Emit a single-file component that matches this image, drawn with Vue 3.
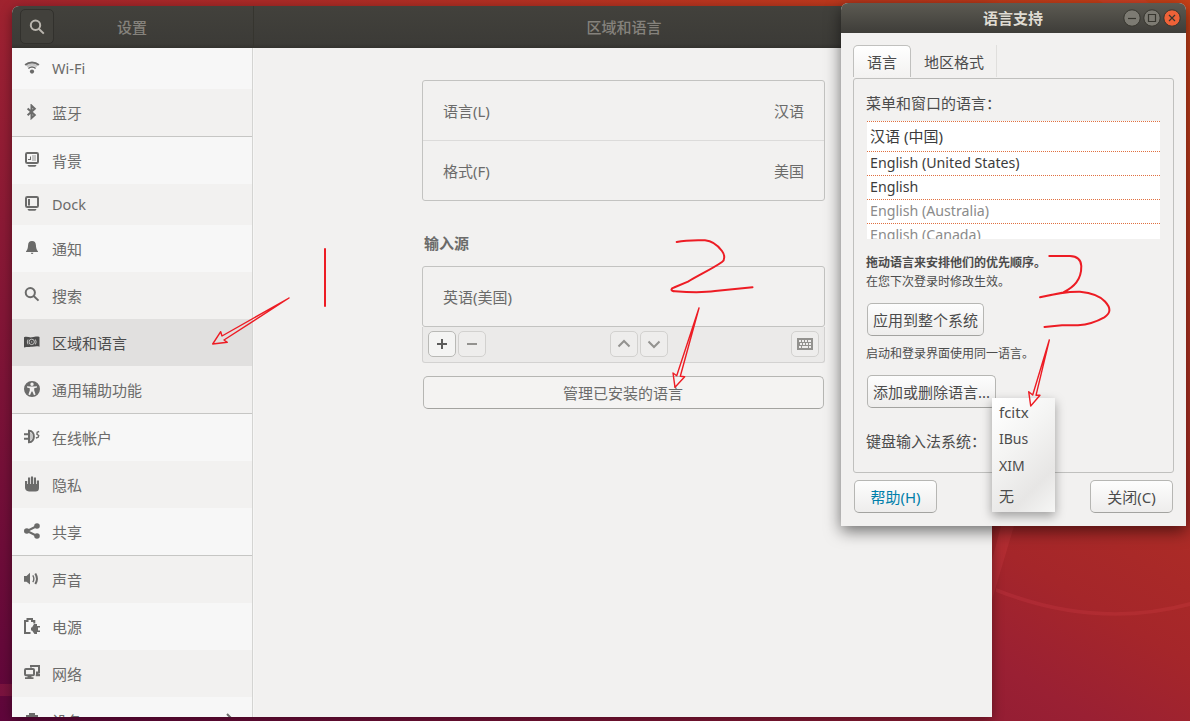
<script setup>
  import { ref } from "vue";

  const selected = ref("region");
  const tab = ref("lang");

  // line : trait, fill : forme pleine, soft : forme claire
  const items = [
  	{ id: "wifi", name: "Wi-Fi", low: true, line: "M1.2 5C5 1.5 11 1.5 14.8 5", thin: "M4.4 8.4C6.3 6.6 9.7 6.6 11.6 8.4", soft: "M2.4 5.6C6 2.9 10 2.9 13.6 5.6L12.2 7.4C9.5 5.2 6.5 5.2 3.8 7.4Z", fill: "M8 9.5a2.1 2.1 0 1 1 0 4.2a2.1 2.1 0 0 1 0-4.2Z" },
  	{ id: "bluetooth", name: "蓝牙", sep: true, line: "M3.6 4.4L10.8 11L7.5 14V1.6L10.8 4.8L3.6 11.2" },
  	{ id: "background", name: "背景", line: "M3.3 1H12.7Q14 1 14 2.3V9.7Q14 11 12.7 11H3.3Q2 11 2 9.7V2.3Q2 1 3.3 1Z", fill: "M3.5 13H12.5Q12 14.8 11 14.8H5Q4 14.8 3.5 13ZM7 4V8H4V7H6V5Z", soft: "M8 3H12V9H8Z" },
  	{ id: "dock", name: "Dock", low: true, line: "M3.3 1H12.7Q14 1 14 2.3V9.7Q14 11 12.7 11H3.3Q2 11 2 9.7V2.3Q2 1 3.3 1Z", fill: "M3.5 13H12.5Q12 14.8 11 14.8H5Q4 14.8 3.5 13ZM4 3H6V9.5H4Z" },
  	{ id: "notify", name: "通知", fill: "M8 1C10.6 1 11.7 2.6 11.9 5C12.1 8.5 12.7 9.8 14 11.5V12H2V11.5C3.3 9.8 3.9 8.5 4.1 5C4.3 2.6 5.4 1 8 1ZM6.8 12.8H9.4Q9.2 14 8.1 14Q7 14 6.8 12.8Z" },
  	{ id: "search", name: "搜索", line: "M6.3 1a4.6 4.6 0 1 1 0 9.2a4.6 4.6 0 0 1 0-9.2ZM9.7 9L14.5 13.6" },
  	{ id: "region", name: "区域和语言", fill: "M0 3.3C3 2 5 3.8 8 3.3C11 2.8 13 2 15.5 3V12.7C13 12 11 12.5 8 12.8C5 13.2 3 12.5 0 13.6Z", cut: "M7.7 5.2a2.7 2.7 0 1 1 0 5.4a2.7 2.7 0 0 1 0-5.4M7.7 7.3V8.6M4 5.5Q2.6 7.9 4 10.4M11.4 5.5Q12.8 7.9 11.4 10.4" },
  	{ id: "access", name: "通用辅助功能", sep: true, fill: "M8 0a8 8 0 1 0 0 16a8 8 0 0 0 0-16ZM8 1.6a1.7 1.7 0 1 1 0 3.4a1.7 1.7 0 0 1 0-3.4ZM3 5.2L7 5.6H9L13 5.2V6.4L10.2 7.2V9.5L11.6 13.6L10 14.2L8.4 10.5H7.6L6 14.2L4.4 13.6L5.8 9.5V7.2L3 6.4Z" },
  	{ id: "online", name: "在线帐户", line: "M5 1.7C11.5 1.7 11.5 13.3 5 13.3ZM0 5.3H4M0 9.8H4", soft: "M6 3C9.6 5 9.6 10 6 12Z", thin: "M15.2 2.5L13.2 3.2L12.9 5.2L14.7 6.5L14.2 8.3L11.9 9" },
  	{ id: "privacy", name: "隐私", fill: "M1 5H3.2V8H4V1.5H6.2V8H7V0.5H9V8H9.8V1.5H12V8H12.8V4.5H15V12Q15 15.5 11.5 15.5H5Q1 15 1 11.5Z" },
  	{ id: "share", name: "共享", sep: true, line: "M13 3L3 8L13 13", fill: "M13 0.2a2.8 2.8 0 1 1 0 5.6a2.8 2.8 0 0 1 0-5.6ZM2.8 5.2a2.8 2.8 0 1 1 0 5.6a2.8 2.8 0 0 1 0-5.6ZM13 10.2a2.8 2.8 0 1 1 0 5.6a2.8 2.8 0 0 1 0-5.6Z" },
  	{ id: "sound", name: "声音", fill: "M0 5H2.5L6 1.8V13.6L2.5 10.7H0Z", line: "M11.3 2.5Q14.6 7.8 11.3 13", thin: "M8.8 4.3Q10.9 7.8 8.8 11.2" },
  	{ id: "power", name: "电源", line: "M6.5 15H1V3H3.5V1H8V3H10.3V5.5", fill: "M7 9.5H8L10 6H13V8H16V9.6H14V12.4H16V14H13V16H10.5L8 12.5H7Z" },
  	{ id: "network", name: "网络", line: "M2 4H9Q10 4 10 5V9.3Q10 10.3 9 10.3H2Q1 10.3 1 9.3V5Q1 4 2 4ZM7 2.5V1H15V7.5H12", fill: "M3.5 11H7.5V12.2H9.5V14H1V12.2H3.5ZM12 7H14.5V9H16V11.2H11.7V9.5H12Z" },
  	{ id: "devices", name: "设备", more: true, fill: "M5 1H11V3H14V15H2V3H5Z" }
  ];

  const langs = [
  	{ name: "汉语 (中国)", on: true },
  	{ name: "English (United States)", on: true },
  	{ name: "English", on: true },
  	{ name: "English (Australia)", on: false },
  	{ name: "English (Canada)", on: false }
  ];

  const methods = ["fcitx", "IBus", "XIM", "无"];
</script>

<template>
	<div class="desktop">
		<svg class="wallpaper" viewBox="0 0 1190 721">
			<path d="M1001 526L992 560V600L1014 526Z" />
			<path d="M996 588Q1096 628 1190 602V606Q1096 631 996 592Z" />
			<path d="M1096 0H1098L1112 8H1156L1145 0Z" />
			<path d="M0 684H12V696H0Z" />
		</svg>

		<div class="settings">
			<div class="header">
				<div class="header-left">
					<button class="search-button">
						<svg viewBox="0 0 16 16"><path class="line" d="M6.5 1.5a4.7 4.7 0 1 1 0 9.4a4.7 4.7 0 0 1 0-9.4ZM10 10L14.8 14.6" /></svg>
					</button>
					<span>设置</span>
				</div>
				<div class="header-main">区域和语言</div>
			</div>
			<div class="content">
				<div class="sidebar">
					<div v-for="(item, i) in items" :key="item.id" class="item" :class="{ low: item.low, sep: item.sep, odd: i % 2 == 1, selected: item.id == selected }" v-on:click="selected = item.id">
						<svg viewBox="0 0 16 16">
							<path v-if="item.soft" class="soft" :d="item.soft" />
							<path v-if="item.fill" class="fill" :d="item.fill" />
							<path v-if="item.line" class="line" :d="item.line" />
							<path v-if="item.thin" class="thin" :d="item.thin" />
							<path v-if="item.cut" class="cut" :d="item.cut" />
						</svg>
						<span>{{ item.name }}</span>
						<svg v-if="item.more" class="more" viewBox="0 0 16 16"><path class="line" d="M5 2L11 8L5 14" /></svg>
					</div>
				</div>
				<div class="main">
					<div class="card">
						<div class="line-row"><span>语言(L)</span><span>汉语</span></div>
						<div class="line-row"><span>格式(F)</span><span>美国</span></div>
					</div>
					<h2>输入源</h2>
					<div class="card">
						<div class="line-row"><span>英语(美国)</span></div>
					</div>
					<div class="toolbar">
						<div class="group">
							<button class="tool active"><svg viewBox="0 0 16 16"><path class="line" d="M8 3V13M3 8H13" /></svg></button>
							<button class="tool"><svg viewBox="0 0 16 16"><path class="line" d="M3 8H13" /></svg></button>
						</div>
						<div class="group">
							<button class="tool"><svg viewBox="0 0 16 16"><path class="line" d="M2.5 10.5L8 5L13.5 10.5" /></svg></button>
							<button class="tool"><svg viewBox="0 0 16 16"><path class="line" d="M2.5 5.5L8 11L13.5 5.5" /></svg></button>
						</div>
						<button class="tool">
							<svg viewBox="0 0 16 16"><path class="fill" d="M0 2H16V14H0ZM2 4V6H4V4ZM5 4V6H7V4ZM8 4V6H10V4ZM11 4V6H14V4ZM3 7V9H5V7ZM6 7V9H8V7ZM9 7V9H11V7ZM12 7V9H14V7ZM2 10V12H4V10ZM5 10V12H11V10ZM12 10V12H14V10Z" /></svg>
						</button>
					</div>
					<button class="manage">管理已安装的语言</button>
				</div>
			</div>
		</div>

		<div class="dialog">
			<div class="title">
				<span>语言支持</span>
				<div class="controls">
					<svg viewBox="0 0 18 18"><circle cx="9" cy="9" r="8.2" /><path d="M5 9.5H13" /></svg>
					<svg viewBox="0 0 18 18"><circle cx="9" cy="9" r="8.2" /><path d="M5.5 5.5H12.5V12.5H5.5Z" /></svg>
					<svg class="close" viewBox="0 0 18 18"><circle cx="9" cy="9" r="8.2" /><path d="M6 6L12 12M12 6L6 12" /></svg>
				</div>
			</div>
			<div class="tabs">
				<div class="tab" :class="{ current: tab == 'lang' }" v-on:click="tab = 'lang'">语言</div>
				<div class="tab" :class="{ current: tab == 'format' }" v-on:click="tab = 'format'">地区格式</div>
			</div>
			<div class="page">
				<div class="label">菜单和窗口的语言：</div>
				<div class="langs">
					<div v-for="lang in langs" :key="lang.name" class="lang" :class="{ off: !lang.on }">{{ lang.name }}</div>
				</div>
				<div class="hint"><b>拖动语言来安排他们的优先顺序。</b></div>
				<div class="hint">在您下次登录时修改生效。</div>
				<button class="apply">应用到整个系统</button>
				<div class="hint">启动和登录界面使用同一语言。</div>
				<button class="install">添加或删除语言...</button>
				<div class="label">键盘输入法系统：</div>
			</div>
			<div class="actions">
				<button class="help">帮助(H)</button>
				<button>关闭(C)</button>
			</div>
			<div class="menu">
				<div v-for="method in methods" :key="method">{{ method }}</div>
			</div>
		</div>

		<svg class="marks" viewBox="0 0 1190 721">
			<path d="M325 249V306" />
			<path class="arrow" d="M289 298L222 336L220.7 331.7L212.7 344L227.3 342.3L224 340Z" />
			<path d="M676.7 242C686 240 696 240 705 240.3C714 241 719 247 722 251C725 255 725 260 722 262C712 269 697 276 688 281.7L674 287.5C670 289 671 291 675 291.3C692 292.5 705 292.5 715 291L752.5 287.2" />
			<path class="arrow" d="M699 308L676.7 375.7L673 373L675 387.3L684.7 376.7L680.3 376.3Z" />
			<path d="M1049.3 256H1070C1078 256.3 1081 260 1081.3 266C1081.5 280 1074 287 1063.3 292.5L1040 297.3C1053 294 1068 291.5 1080 291.7C1093 293 1101 297 1105 301.5C1111 308 1111 313 1104.3 317.3C1096 322 1088 324.5 1078 325.3H1062L1044.5 327" />
			<path class="arrow" d="M1049.3 340L1032.7 395L1028.7 391.7L1030.7 406L1040 395.3L1036 395.3Z" />
		</svg>
	</div>
</template>

<style>
  body {
  	overflow: hidden;
  }
</style>

<style scoped>
  .desktop {
  	position: relative;
  	width: 1190px;
  	height: 721px;
  	overflow: hidden;
  	background: linear-gradient(to top right, #5f063b, #9a2033 46%, #a5262a 54%, #c94117);
  	font-family: "Noto Sans", "Noto Sans CJK SC", sans-serif;
  	font-size: 15px;
  	line-height: 20px;
  	color: #6b6b6a;
  }

  .desktop * {
  	box-sizing: border-box;
  }

  svg {
  	display: block;
  	width: 16px;
  	height: 16px;
  	flex: none;
  }

  .fill {
  	fill: currentColor;
  	fill-rule: evenodd;
  }

  .soft {
  	fill: currentColor;
  	opacity: 0.35;
  }

  .line {
  	fill: none;
  	stroke: currentColor;
  	stroke-width: 2;
  }

  .thin {
  	fill: none;
  	stroke: currentColor;
  	stroke-width: 1.4;
  }

  .cut {
  	fill: none;
  	stroke: #e0dfde;
  	stroke-width: 0.8;
  }

  .wallpaper {
  	position: absolute;
  	width: 1190px;
  	height: 721px;
  	fill: rgba(225, 70, 80, 0.2);
  }

  button {
  	padding: 0;
  	font: inherit;
  	color: #4c4c4c;
  	border: 1px solid #b6b6b3;
  	border-bottom-color: #a3a3a0;
  	border-radius: 5px;
  	background: linear-gradient(#fdfdfd, #eeedec);
  }

  .settings {
  	position: absolute;
  	left: 12px;
  	top: 6px;
  	width: 980px;
  	height: 711px;
  	border-radius: 7px 7px 0 0;
  	overflow: hidden;
  	background: #f2f1f0;
  	box-shadow: 0 3px 12px rgba(0, 0, 0, 0.4);
  }

  .header {
  	display: flex;
  	height: 42px;
  	background: linear-gradient(#42413c, #3c3b37 90%, #33322e);
  	color: #85827c;
  	line-height: 42px;
  	text-align: center;
  	font-weight: 500;
  }

  .header-left {
  	position: relative;
  	width: 242px;
  	padding-right: 1px;
  	border-right: 1px solid #36352f;
  }

  .header-main {
  	flex: 1;
  	padding-left: 2px;
  }

  .search-button {
  	position: absolute;
  	left: 8px;
  	top: 3px;
  	display: flex;
  	align-items: center;
  	justify-content: center;
  	width: 34px;
  	height: 35px;
  	border-color: #32312d;
  	background: #42413c;
  	color: #b9b5ae;
  }

  .content {
  	display: flex;
  	height: 669px;
  }

  .sidebar {
  	width: 241px;
  	overflow: hidden;
  	border-right: 1px solid #d4d4d2;
  }

  .item {
  	display: flex;
  	align-items: center;
  	gap: 12px;
  	height: 47px;
  	padding-left: 12px;
  	background: #f7f7f7;
  }

  .item > svg {
  	margin-bottom: 1px;
  }

  .item.low {
  	height: 41px;
  	padding-bottom: 1px;
  	font-size: 14.5px;
  }

  .item.low > svg {
  	margin-bottom: 0;
  }

  .item.odd {
  	background: #f2f1f0;
  }

  .item.sep {
  	height: 48px;
  	border-bottom: 1px solid #c6c6c4;
  }

  .item.selected {
  	background: #e1e0df;
  	color: #4c4c4c;
  }

  .item .more {
  	margin-left: auto;
  	margin-right: 14px;
  }

  .main {
  	flex: 1;
  	padding: 32px 167px 0 168px;
  	border-left: 1px solid #f6f6f5;
  }

  .card {
  	width: 403px;
  	border: 1px solid #c3c3c1;
  	border-radius: 3px;
  }

  .line-row {
  	display: flex;
  	align-items: center;
  	justify-content: space-between;
  	height: 59px;
  	padding: 0 20px;
  }

  .line-row + .line-row {
  	height: 60px;
  	border-top: 1px solid #dcdbda;
  }

  h2 {
  	margin: 32px 0 13px 2px;
  	font-size: 15px;
  	line-height: 20px;
  }

  .toolbar {
  	display: flex;
  	justify-content: space-between;
  	width: 403px;
  	height: 36px;
  	padding: 4px 5px;
  	border: 1px solid #d3d2d1;
  	border-top: none;
  	border-radius: 0 0 3px 3px;
  	background: #ebeae9;
  }

  .group {
  	display: flex;
  	gap: 2px;
  }

  .group + .group {
  	margin-left: 1px;
  }

  .tool {
  	display: flex;
  	align-items: center;
  	justify-content: center;
  	width: 28px;
  	height: 26px;
  	border-color: #d2d1cf;
  	background: #eeedec;
  	color: #93928f;
  }

  .tool.active {
  	border-color: #b9b9b6;
  	background: #f4f4f3;
  	color: #5c5c5b;
  }

  .manage {
  	display: block;
  	width: 401px;
  	height: 33px;
  	margin: 13px 0 0 1px;
  	padding-right: 1px;
  	background: #f4f3f2;
  	color: #6b6b6a;
  }

  .dialog {
  	position: absolute;
  	left: 841px;
  	top: 3px;
  	width: 345px;
  	height: 523px;
  	border-radius: 7px 7px 0 0;
  	background: #f2f1f0;
  	color: #4c4c4c;
  	box-shadow: 0 5px 16px rgba(0, 0, 0, 0.55);
  }

  .title {
  	position: relative;
  	height: 30px;
  	padding-right: 1px;
  	border-radius: 7px 7px 0 0;
  	background: linear-gradient(#5c5a52, #3e3d39);
  	color: #dfdbd2;
  	font-weight: bold;
  	line-height: 30px;
  	text-align: center;
  }

  .controls {
  	position: absolute;
  	right: 5px;
  	top: 6px;
  	display: flex;
  	gap: 2px;
  }

  .controls svg {
  	width: 18px;
  	height: 18px;
  	fill: #7d7b73;
  	stroke: #37362f;
  }

  .controls path {
  	fill: none;
  	stroke-width: 1.2;
  }

  .controls .close {
  	fill: #ee6238;
  }

  .tabs {
  	display: flex;
  	height: 45px;
  	padding: 12px 12px 0;
  }

  .tab {
  	height: 32px;
  	padding: 7px 12px 0 13px;
  	border-right: 1px solid #e0dfdd;
  }

  .tab.current {
  	border: 1px solid #c0c0be;
  	border-bottom: none;
  	border-radius: 5px 5px 0 0;
  	background: linear-gradient(#fff, #f3f2f1);
  	padding: 6px 13px 0;
  }

  .page {
  	height: 395px;
  	width: 321px;
  	margin-left: 12px;
  	padding: 14px 12px 0;
  	border: 1px solid #c0c0be;
  	border-radius: 3px;
  }

  .page button {
  	display: block;
  	height: 33px;
  	margin-left: 1px;
  }

  .langs {
  	width: 293px;
  	height: 118px;
  	margin: 8px 0 14px 1px;
  	overflow: hidden;
  	background: #fff;
  	color: #3c3c3c;
  	font-size: 14.2px;
  }

  .lang {
  	height: 24px;
  	padding-left: 3px;
  	border-top: 1px dotted #e07040;
  	line-height: 22px;
  }

  .lang:first-child {
  	height: 30px;
  	font-size: 15px;
  	line-height: 29px;
  }

  .lang.off {
  	color: #8b8b8b;
  }

  .hint {
  	height: 19px;
  	font-size: 12px;
  	line-height: 19px;
  	white-space: nowrap;
  }

  .page .apply {
  	width: 117px;
  	margin-top: 12px;
  	margin-bottom: 8px;
  }

  .page .install {
  	width: 129px;
  	margin: 12px 0 23px 1px;
  }

  .actions {
  	display: flex;
  	justify-content: space-between;
  	padding: 7px 13px 0;
  }

  .actions button {
  	width: 83px;
  	height: 33px;
  }

  .actions .help {
  	color: #007faa;
  }

  .menu {
  	position: absolute;
  	left: 151px;
  	top: 395px;
  	width: 63px;
  	height: 114px;
  	background: linear-gradient(135deg, #fff 5%, #f4f4f3 40%, #e7e6e5 75%, #f6f6f5);
  	box-shadow: 0 4px 10px rgba(0, 0, 0, 0.35);
  	font-size: 14px;
  }

  .menu div {
  	height: 27px;
  	padding: 4px 7px 0;
  }

  .menu div:first-child {
  	font-size: 15px;
  }

  .menu div:last-child {
  	padding-top: 7px;
  	font-size: 15px;
  }

  .marks {
  	position: absolute;
  	left: 0;
  	top: 0;
  	width: 1190px;
  	height: 721px;
  	fill: none;
  	stroke: #ed1c24;
  	stroke-width: 2;
  	stroke-linecap: round;
  	stroke-linejoin: round;
  	pointer-events: none;
  }

  .marks .arrow {
  	stroke-width: 1.4;
  }
</style>
